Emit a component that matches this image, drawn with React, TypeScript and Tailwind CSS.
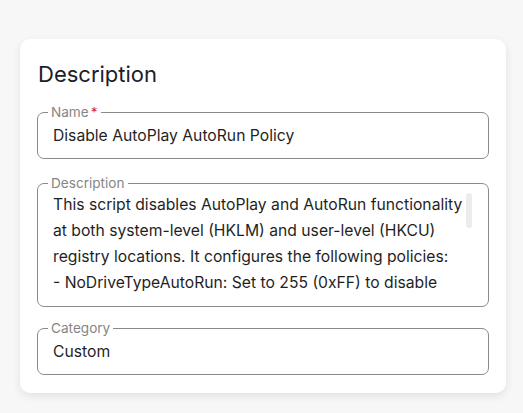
const descLines = [
  "This script disables AutoPlay and AutoRun functionality",
  "at both system-level (HKLM) and user-level (HKCU)",
  "registry locations. It configures the following policies:",
  "- NoDriveTypeAutoRun: Set to 255 (0xFF) to disable",
];

const Field: React.FC<{ label: string; required?: boolean; children: React.ReactNode; className?: string }> = ({
  label,
  required,
  children,
  className = "",
}) => (
  <fieldset className={`border border-[#8a8a8a] rounded-[7px] pl-[10px] pr-[10px] min-w-0 ${className}`}>
    <legend className="px-[3px] text-[13.6px] leading-[16px] text-[#858585]">
      {label}
      {required && <span className="text-[#d32f2f] ml-[2px]">*</span>}
    </legend>
    {children}
  </fieldset>
);

export default function App() {
  return (
    <div className="w-[523px] h-[413px] bg-[#f7f7f7] pl-[20px] pt-[39px] font-['Inter',sans-serif]">
      <div className="w-[486px] bg-white rounded-[10px] shadow-[0_3px_9px_rgba(0,0,0,0.09)] px-[17px] pt-[20px] pb-[18px]">
        <h2 className="text-[22px] leading-[30px] text-[#1c1c2b] pl-[1px] mb-[15px]">Description</h2>

        <Field label="Name" required className="pt-[5px] pb-[11px]">
          <div className="pl-[5px] text-[15.7px] leading-[22px] text-[#1f1f1f]">Disable AutoPlay AutoRun Policy</div>
        </Field>

        <Field label="Description" className="mt-[16px]">
          <div className="flex h-[115px] overflow-hidden">
            <div className="flex-1 pl-[5px] pt-[1px] text-[15.7px] leading-[26px] text-[#1f1f1f]">
              {descLines.map((line) => (
                <div key={line} className="whitespace-nowrap">
                  {line}
                </div>
              ))}
            </div>
            <div className="w-[6px] h-[35px] mt-[2px] mr-[6px] rounded-[3px] bg-[#ececec]" />
          </div>
        </Field>

        <Field label="Category" className="mt-[13px] pt-[5px] pb-[11px]">
          <div className="pl-[5px] text-[15.7px] leading-[22px] text-[#1f1f1f]">Custom</div>
        </Field>
      </div>
    </div>
  );
}
